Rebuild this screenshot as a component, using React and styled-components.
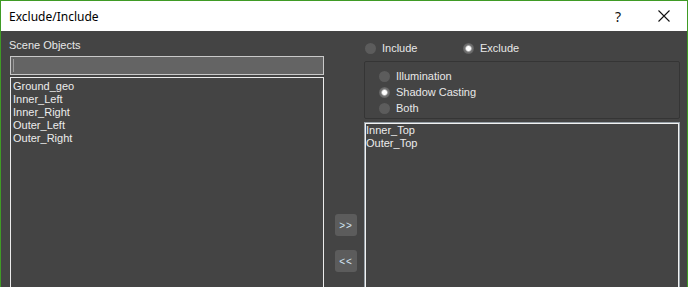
import React from "react";
import styled, { createGlobalStyle } from "styled-components";

const GlobalStyle = createGlobalStyle`
  html, body {
    margin: 0;
    padding: 0;
    background: #444444;
    overflow: hidden;
  }
`;

const Window = styled.div`
  width: 688px;
  height: 287px;
  box-sizing: border-box;
  border: 1px solid #3f9b25;
  border-bottom: none;
  background: #444444;
  display: flex;
  flex-direction: column;
  overflow: hidden;
  font-family: "Liberation Sans", Arial, sans-serif;
`;

const TitleBar = styled.div`
  height: 30px;
  flex: none;
  background: #ffffff;
  display: flex;
  align-items: center;
  padding-left: 8px;
`;

const Title = styled.div`
  font-family: "Noto Sans", sans-serif;
  font-size: 12px;
  color: #000;
  flex: 1;
`;

const TitleButton = styled.div`
  width: ${(p) => p.$w}px;
  height: 30px;
  display: flex;
  align-items: center;
  justify-content: center;
  font-family: "Noto Sans", sans-serif;
  font-size: 14px;
  color: #111;
`;

const Body = styled.div`
  flex: 1;
  display: flex;
  align-items: flex-start;
  padding: 7px 7px 0 8px;
  min-height: 0;
  overflow: hidden;
`;

const LeftColumn = styled.div`
  width: 315px;
  flex: none;
  display: flex;
  flex-direction: column;
`;

const Label = styled.div`
  height: 15px;
  line-height: 15px;
  font-size: 11px;
  color: #e8e8e8;
  margin-bottom: 3px;
`;

const SearchInput = styled.div`
  margin-left: 1px;
  height: 19px;
  box-sizing: border-box;
  border: 1px solid #c9c9c9;
  background: #646464;
  position: relative;
  &::before {
    content: "";
    position: absolute;
    left: 2px;
    top: 2px;
    bottom: 2px;
    width: 1px;
    background: #9c9c9c;
  }
`;

const ListBox = styled.div`
  margin-top: ${(p) => p.$top}px;
  margin-left: ${(p) => (p.$focused ? 0 : 1)}px;
  height: 260px;
  box-sizing: border-box;
  border: 1px solid ${(p) => (p.$focused ? "#97a0a8" : "#ececec")};
  box-shadow: ${(p) => (p.$focused ? "inset 0 0 0 1px #f2f2f2" : "none")};
  padding: ${(p) => (p.$focused ? "1px 1px" : "2px 2px")};
`;

const ListItem = styled.div`
  font-size: 11px;
  line-height: 13px;
  color: #ececec;
  white-space: nowrap;
`;

const MiddleColumn = styled.div`
  width: 40px;
  flex: none;
  padding-left: 11px;
  box-sizing: border-box;
  display: flex;
  flex-direction: column;
  gap: 14px;
  padding-top: 176px;
`;

const ArrowButton = styled.div`
  width: 22px;
  height: 22px;
  border-radius: 3px;
  background: #5c5c5c;
  color: #d4e6f4;
  font-size: 10px;
  letter-spacing: 1px;
  display: flex;
  align-items: center;
  justify-content: center;
`;

const RightColumn = styled.div`
  flex: 1;
  display: flex;
  flex-direction: column;
`;

const ModeRow = styled.div`
  height: 18px;
  margin-top: 1px;
  display: flex;
  align-items: center;
  padding-left: 1px;
`;

const Radio = styled.div`
  display: flex;
  align-items: center;
  gap: 6px;
  width: ${(p) => (p.$w ? `${p.$w}px` : "auto")};
  height: 16px;
  flex: none;
  font-size: 11px;
  color: #e8e8e8;
`;

const Dot = styled.span`
  width: 11px;
  height: 11px;
  border-radius: 50%;
  flex: none;
  background: ${(p) =>
    p.$checked
      ? "radial-gradient(circle, #ffffff 0 2px, #cfcfcf 2.6px, #777777 3.6px, #5e5e5e 5.5px)"
      : "#5c5c5c"};
`;

const GroupBox = styled.div`
  margin-top: 4px;
  height: 58px;
  box-sizing: border-box;
  border: 1px solid #353535;
  border-radius: 2px;
  padding: 6px 0 0 14px;
  display: flex;
  flex-direction: column;
`;

const CloseIcon = () => (
  <svg width="12" height="12" viewBox="0 0 12 12">
    <path d="M0.5 0.5 L11.5 11.5 M11.5 0.5 L0.5 11.5" stroke="#111" strokeWidth="1.1" fill="none" />
  </svg>
);

const sceneObjects = ["Ground_geo", "Inner_Left", "Inner_Right", "Outer_Left", "Outer_Right"];
const excluded = ["Inner_Top", "Outer_Top"];

export default function App() {
  return (
    <>
      <GlobalStyle />
      <Window>
        <TitleBar>
          <Title>Exclude/Include</Title>
          <TitleButton $w={46}>?</TitleButton>
          <TitleButton $w={46}>
            <CloseIcon />
          </TitleButton>
        </TitleBar>
        <Body>
          <LeftColumn>
            <Label>Scene Objects</Label>
            <SearchInput />
            <ListBox $top={2}>
              {sceneObjects.map((name) => (
                <ListItem key={name}>{name}</ListItem>
              ))}
            </ListBox>
          </LeftColumn>
          <MiddleColumn>
            <ArrowButton>&gt;&gt;</ArrowButton>
            <ArrowButton>&lt;&lt;</ArrowButton>
          </MiddleColumn>
          <RightColumn>
            <ModeRow>
              <Radio $w={98}>
                <Dot />
                Include
              </Radio>
              <Radio>
                <Dot $checked />
                Exclude
              </Radio>
            </ModeRow>
            <GroupBox>
              <Radio>
                <Dot />
                Illumination
              </Radio>
              <Radio>
                <Dot $checked />
                Shadow Casting
              </Radio>
              <Radio>
                <Dot />
                Both
              </Radio>
            </GroupBox>
            <ListBox $top={3} $focused>
              {excluded.map((name) => (
                <ListItem key={name}>{name}</ListItem>
              ))}
            </ListBox>
          </RightColumn>
        </Body>
      </Window>
    </>
  );
}
